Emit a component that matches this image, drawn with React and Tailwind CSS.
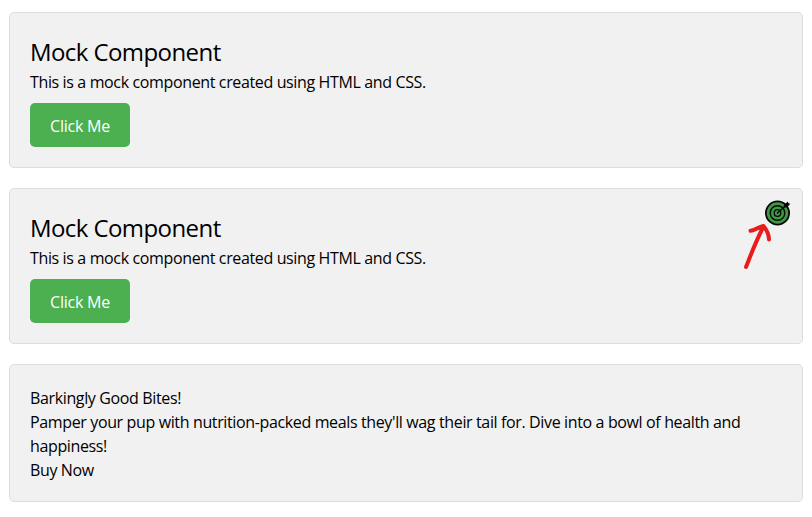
import React from "react";

function Card({ children }) {
  return (
    <section className="relative rounded-[5px] border border-[#dddddd] bg-[#f1f1f1] px-5 pt-[21px] pb-[19px]">
      {children}
    </section>
  );
}

function MockComponent() {
  return (
    <>
      <h2 className="text-[24px] leading-9 tracking-[-0.58px]">
        <span>Mock Component</span>
      </h2>
      <p>
        <span>This is a mock component created using HTML and CSS.</span>
      </p>
      <button className="mt-[9px] mb-px block h-11 w-[100px] rounded-[5px] bg-[#4caf50] pt-0.5 text-center tracking-[-0.25px] text-white">
        <span>Click Me</span>
      </button>
    </>
  );
}

function TargetIcon() {
  return (
    <svg className="absolute top-[10px] right-[10px]" width="28" height="28" viewBox="0 0 28 28" fill="none">
      <circle cx="13.5" cy="14" r="11.6" fill="#3f9845" stroke="#050a05" strokeWidth="1.8" />
      <circle cx="13.5" cy="14" r="7.3" stroke="#050a05" strokeWidth="1.4" />
      <circle cx="13.5" cy="14" r="3.3" stroke="#050a05" strokeWidth="1.3" />
      <path d="M13.500 14L23 5.500" stroke="#050a05" strokeWidth="1.5" strokeLinecap="round" />
      <path d="M19.500 8.500L20 5.500L24 2.400L24.300 4.300L26.300 4.800L23 8.500Z" fill="#050a05" />
    </svg>
  );
}

function ArrowMark() {
  return (
    <svg className="absolute top-[32px] right-[28px]" width="34" height="50" viewBox="0 0 34 50" fill="none">
      <path
        d="M6 46C10 36 15 22 23.500 5.500M10.500 9.800C14 9.500 18 6.500 23.500 5C26 8 28.800 12 29 18.500"
        stroke="#e81c1c"
        strokeWidth="4"
        strokeLinecap="round"
        strokeLinejoin="round"
      />
    </svg>
  );
}

export default function App() {
  return (
    <main className="flex h-[517px] flex-col gap-5 bg-white px-[9px] pt-3 font-['Open_Sans','Noto_Sans',sans-serif] text-[16px] leading-6 tracking-[-0.365px] text-black">
      <Card>
        <MockComponent />
      </Card>
      <Card>
        <MockComponent />
        <TargetIcon />
        <ArrowMark />
      </Card>
      <Card>
        <p>
          <span>Barkingly Good Bites!</span>
        </p>
        <p>
          Pamper your pup with nutrition-packed meals they'll wag their tail for. Dive into a bowl of health and
          happiness!
        </p>
        <p>
          <span>Buy Now</span>
        </p>
      </Card>
    </main>
  );
}
